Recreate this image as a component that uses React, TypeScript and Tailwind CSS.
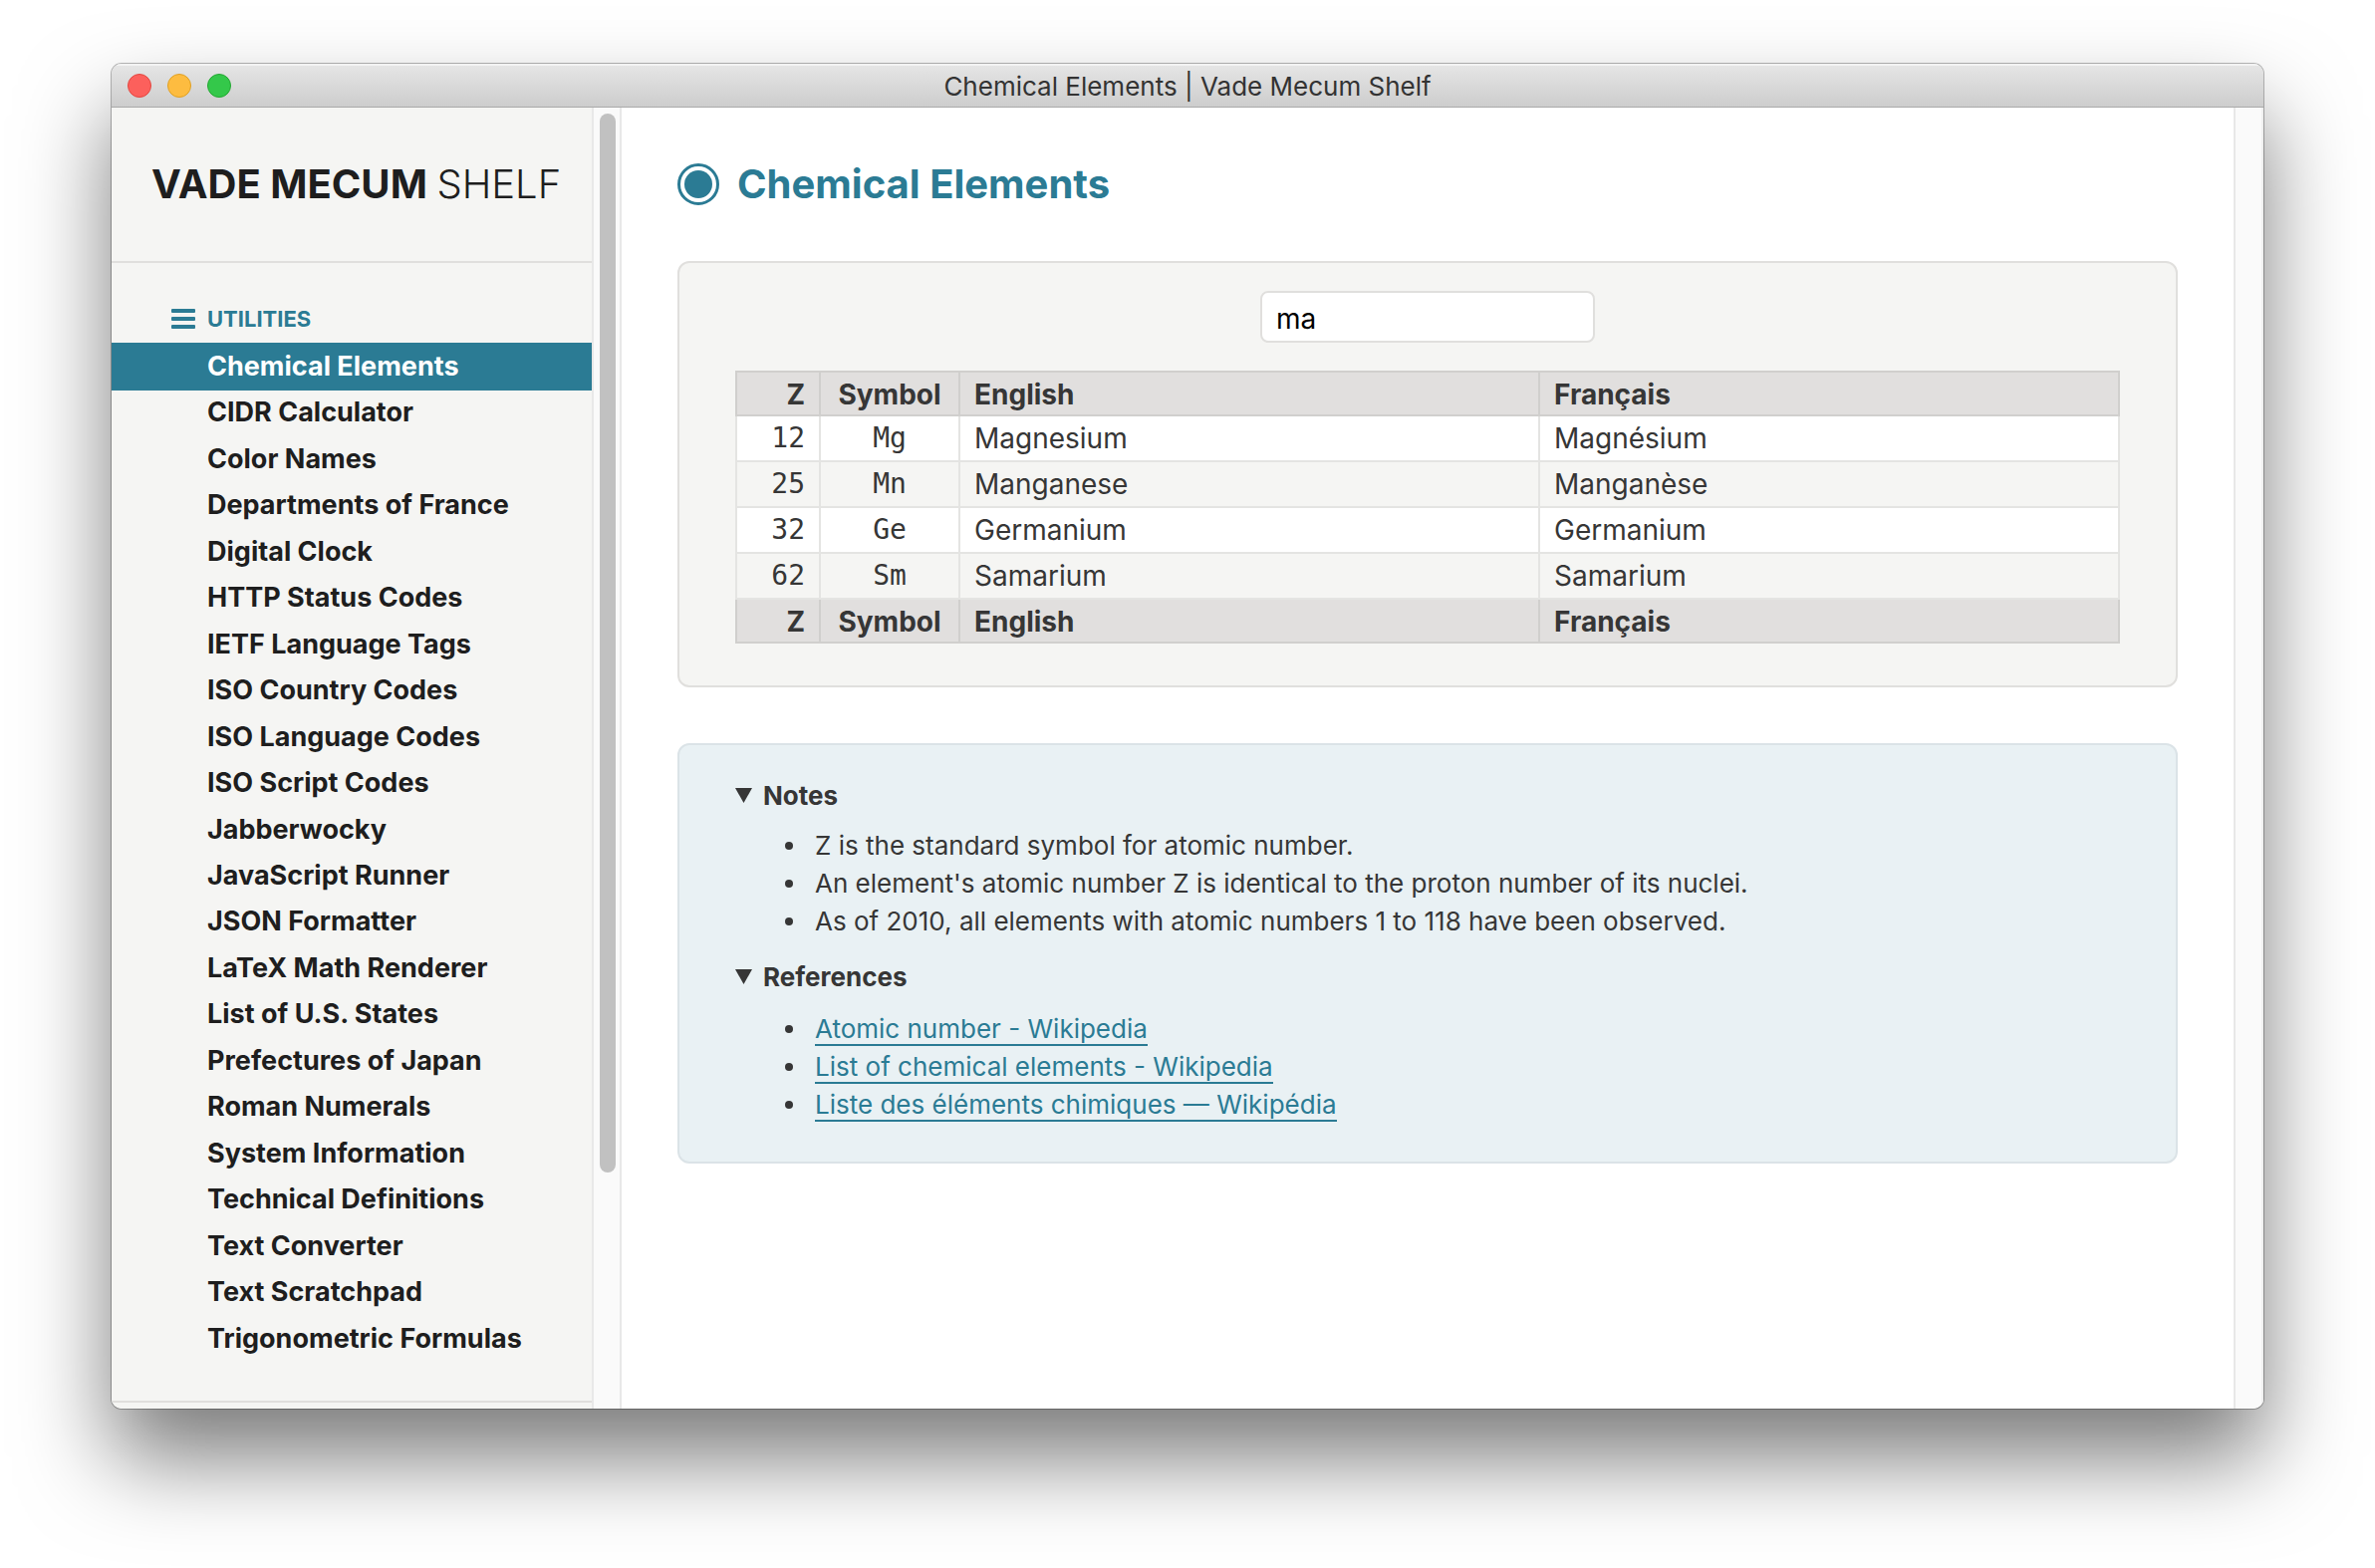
const UTILITIES = [
  'Chemical Elements',
  'CIDR Calculator',
  'Color Names',
  'Departments of France',
  'Digital Clock',
  'HTTP Status Codes',
  'IETF Language Tags',
  'ISO Country Codes',
  'ISO Language Codes',
  'ISO Script Codes',
  'Jabberwocky',
  'JavaScript Runner',
  'JSON Formatter',
  'LaTeX Math Renderer',
  'List of U.S. States',
  'Prefectures of Japan',
  'Roman Numerals',
  'System Information',
  'Technical Definitions',
  'Text Converter',
  'Text Scratchpad',
  'Trigonometric Formulas',
];

const ELEMENTS = [
  { z: 12, symbol: 'Mg', en: 'Magnesium', fr: 'Magnésium' },
  { z: 25, symbol: 'Mn', en: 'Manganese', fr: 'Manganèse' },
  { z: 32, symbol: 'Ge', en: 'Germanium', fr: 'Germanium' },
  { z: 62, symbol: 'Sm', en: 'Samarium', fr: 'Samarium' },
];

const NOTES = [
  'Z is the standard symbol for atomic number.',
  "An element's atomic number Z is identical to the proton number of its nuclei.",
  'As of 2010, all elements with atomic numbers 1 to 118 have been observed.',
];

const REFERENCES = [
  'Atomic number - Wikipedia',
  'List of chemical elements - Wikipedia',
  'Liste des éléments chimiques — Wikipédia',
];

function TitleBar() {
  return (
    <header className="grid h-11 shrink-0 grid-cols-[1fr_auto_1fr] items-center border-b border-[#a9a9a9] bg-linear-to-b from-[#e6e6e6] to-[#cdcdcd] px-4 shadow-[inset_0_2px_0_#f3f3f3]">
      <div className="flex gap-4">
        <button type="button" aria-label="Close" className="size-6 rounded-full border border-[#e2463f] bg-[#fc605c]" />
        <button type="button" aria-label="Minimize" className="size-6 rounded-full border border-[#dfa023] bg-[#fdbc40]" />
        <button type="button" aria-label="Zoom" className="size-6 rounded-full border border-[#24a732] bg-[#34c84a]" />
      </div>
      <span className="pt-[2px] text-[26px] leading-none text-[#333]">Chemical Elements | Vade Mecum Shelf</span>
    </header>
  );
}

function Sidebar() {
  return (
    <aside className="flex shrink-0">
      <div className="w-[482px] overflow-hidden bg-[#f5f5f3] text-[#1e1e1e]">
        <div className="flex h-[156px] items-center border-b-2 border-[#e0dfdd] pl-10">
          <p className="text-[40px] leading-none font-bold whitespace-nowrap">
            VADE MECUM <span className="font-light">SHELF</span>
          </p>
        </div>
        <nav className="border-b-2 border-[#e0dfdd] pt-9 pb-10">
          <h2 className="flex h-10 items-center gap-3 pl-[60px] text-[22px] font-bold text-[#2b7b94]">
            <svg viewBox="0 0 24 20" className="h-5 w-6 fill-current" aria-hidden="true">
              <rect width="24" height="4" rx="1" />
              <rect y="8" width="24" height="4" rx="1" />
              <rect y="16" width="24" height="4" rx="1" />
            </svg>
            UTILITIES
          </h2>
          <ul className="mt-1 grid h-[1022px] auto-rows-fr text-[27px] leading-[48px] font-bold">
            {UTILITIES.map((name, i) => (
              <li key={name} className="min-h-0">
                <a
                  href={'#' + i}
                  className={i === 0 ? 'block h-12 bg-[#2b7b94] pl-24 text-white' : 'block h-12 pl-24'}
                >
                  {name}
                </a>
              </li>
            ))}
          </ul>
        </nav>
      </div>
      <div className="w-[30px] border-x-2 border-[#e8e8e8] bg-[#fafafa] px-[6px] pt-[6px]">
        <div className="h-[1063px] w-4 rounded-full bg-[#c1c1c1]" />
      </div>
    </aside>
  );
}

function HeadingRow() {
  return (
    <tr className="h-11 bg-[#e1dfde] [&>th]:border-2 [&>th]:border-[#d0cfcd] [&>th]:pt-[2px]">
      <th className="pr-[14px] text-right">Z</th>
      <th className="text-center">Symbol</th>
      <th className="pl-[14px] text-left">English</th>
      <th className="pl-[14px] text-left">Français</th>
    </tr>
  );
}

function ElementsTable() {
  return (
    <table className="w-full table-fixed border-collapse text-[28px] leading-8">
      <colgroup>
        <col className="w-[84px]" />
        <col className="w-[140px]" />
        <col />
        <col />
      </colgroup>
      <thead>
        <HeadingRow />
      </thead>
      <tbody>
        {ELEMENTS.map((el) => (
          <tr
            key={el.z}
            className="h-[46px] odd:bg-white even:bg-[#f5f5f3] [&>td]:border-2 [&>td]:border-[#e4e4e2]"
          >
            <td className="pr-[14px] text-right font-['DejaVu_Sans_Mono',monospace]">{el.z}</td>
            <td className="text-center font-['DejaVu_Sans_Mono',monospace]">{el.symbol}</td>
            <td className="pl-[14px]">{el.en}</td>
            <td className="pl-[14px]">{el.fr}</td>
          </tr>
        ))}
      </tbody>
      <tfoot>
        <HeadingRow />
      </tfoot>
    </table>
  );
}

function Summary({ label }: { label: string }) {
  return (
    <summary className="flex h-8 list-none items-center gap-[11px] font-bold">
      <svg viewBox="0 0 17 15" className="h-[15px] w-[17px] fill-current" aria-hidden="true">
        <path d="M0 0H17L8.5 15Z" />
      </svg>
      {label}
    </summary>
  );
}

function BulletItem({ children }: { children: React.ReactNode }) {
  return (
    <li className="flex items-center gap-[22px] before:size-2 before:shrink-0 before:rounded-full before:bg-[#363636] before:content-['']">
      <span>{children}</span>
    </li>
  );
}

export default function App() {
  return (
    <div className="flex h-screen flex-col bg-white px-28 pt-16 pb-40 font-['Inter',sans-serif] text-[26px] text-[#363636]">
      <div className="flex min-h-0 flex-1 flex-col overflow-hidden rounded-[10px] bg-white shadow-[0_0_0_1px_rgba(0,0,0,0.28),0_50px_90px_rgba(0,0,0,0.52)]">
        <TitleBar />
        <div className="flex min-h-0 flex-1">
          <Sidebar />
          <main className="min-w-0 flex-1 px-14 pt-14">
            <h1 className="flex h-[42px] items-center gap-[18px] text-[40px] leading-none font-bold text-[#2b7b94]">
              <svg viewBox="0 0 42 42" className="size-[42px]" aria-hidden="true">
                <circle cx="21" cy="21" r="19.5" fill="none" stroke="currentColor" strokeWidth="3" />
                <circle cx="21" cy="21" r="14" fill="currentColor" />
              </svg>
              Chemical Elements
            </h1>
            <section className="mt-14 rounded-xl border-2 border-[#e0dfdd] bg-[#f5f5f3] px-14 pt-7 pb-[42px]">
              <input
                type="text"
                aria-label="Filter elements"
                defaultValue="ma"
                className="mx-auto mb-7 block h-[52px] w-[336px] rounded-lg border-2 border-[#e0dfdd] bg-white px-[14px] pt-1 text-[28px] text-black"
              />
              <ElementsTable />
            </section>
            <section className="mt-14 rounded-xl border-2 border-[#dbe3e7] bg-[#e9f1f4] px-14 pt-[34px] pb-[38px]">
              <details open>
                <Summary label="Notes" />
                <ul className="mt-4 pl-[50px] leading-[38px]">
                  {NOTES.map((note) => (
                    <BulletItem key={note}>{note}</BulletItem>
                  ))}
                </ul>
              </details>
              <details open className="mt-5">
                <Summary label="References" />
                <ul className="mt-[18px] pl-[50px] leading-[38px]">
                  {REFERENCES.map((ref) => (
                    <BulletItem key={ref}>
                      <a href="#reference" className="border-b-2 border-[#2b7b94] text-[#2b7b94]">
                        {ref}
                      </a>
                    </BulletItem>
                  ))}
                </ul>
              </details>
            </section>
          </main>
          <div className="w-[30px] shrink-0 border-x-2 border-l-[#e8e8e8] border-r-[#f0f0f0] bg-[#fafafa]" />
        </div>
      </div>
    </div>
  );
}
